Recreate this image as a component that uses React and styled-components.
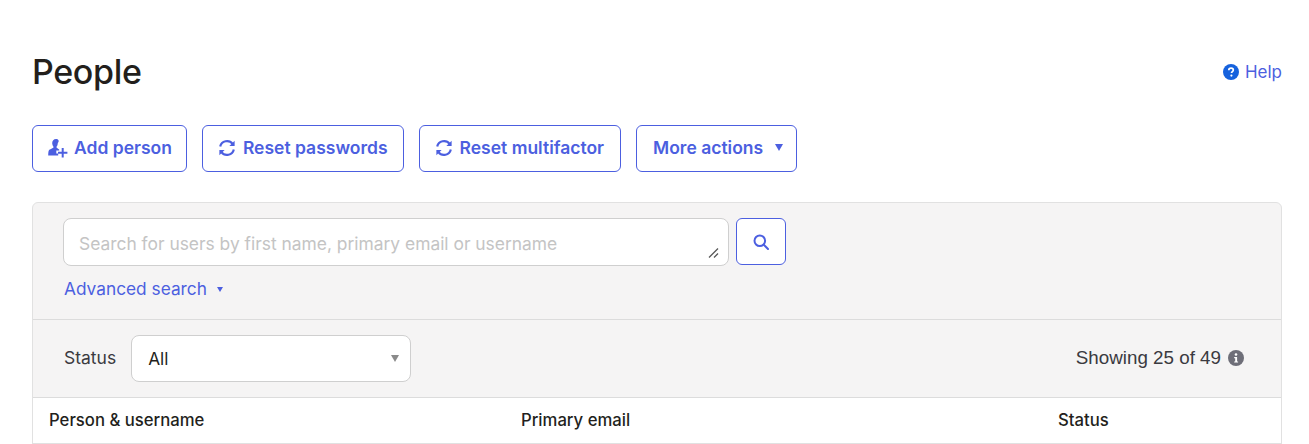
import React from 'react';
import styled, { createGlobalStyle } from 'styled-components';

const GlobalStyle = createGlobalStyle`
	html, body {
		margin: 0;
		padding: 0;
		background: #fff;
		font-family: Inter, 'Noto Sans', sans-serif;
		color: #231f1c;
	}
	* {
		box-sizing: border-box;
	}
`;

const BLUE = '#4c5fe0';

const PersonAddIcon = () => (
	<svg width="20" height="20" viewBox="0 0 20 20" fill={BLUE}>
		<path d="M8 1C5.700 1 4.200 2.700 4.200 5c0 1.500.6 2.800 1.200 3.600.3.400.2.900-.2 1.200C3.600 11 1.100 11.200.6 13c-.3 1.200-.4 2.700-.4 4.500h10v-2.100H8.300v-2.800h2.900v-1.100c-.7-.5-1.600-1-2.400-1.700-.4-.3-.5-.8-.2-1.200.7-.8 1.200-2.100 1.200-3.600C11.800 2.700 10.300 1 8 1z" />
		<path d="M13.700 10h2v3.700h3.700v2h-3.700v3.700h-2v-3.700H10v-2h3.700z" />
	</svg>
);

const RefreshIcon = () => (
	<svg width="18" height="18" viewBox="0 0 18 18" fill="none" stroke={BLUE} strokeWidth="2.200">
		<path d="M2.200 7.600A7 7 0 0 1 14.600 4.900" />
		<path d="M15.800 10.400A7 7 0 0 1 3.400 13.100" />
		<path d="M16.600 1.700v5.200h-5.200z" fill={BLUE} stroke="none" />
		<path d="M1.400 16.300v-5.200h5.200z" fill={BLUE} stroke="none" />
	</svg>
);

const SearchIcon = () => (
	<svg width="16" height="16" viewBox="0 0 16 16" fill="none" stroke={BLUE} strokeWidth="2">
		<circle cx="6.800" cy="6.800" r="5.300" />
		<path d="M10.800 10.800l4.200 4.200" strokeLinecap="round" />
	</svg>
);

const HelpIcon = () => (
	<svg width="16" height="16" viewBox="0 0 16 16">
		<circle cx="8" cy="8" r="8" fill="#1662dd" />
		<path
			d="M5.800 6.200c0-1.300 1-2 2.300-2s2.200.7 2.200 1.900c0 1.600-1.800 1.600-1.800 3"
			fill="none"
			stroke="#fff"
			strokeWidth="1.700"
		/>
		<circle cx="8.400" cy="11.600" r="1.100" fill="#fff" />
	</svg>
);

const InfoIcon = () => (
	<svg width="16" height="16" viewBox="0 0 16 16">
		<circle cx="8" cy="8" r="8" fill="#6e6e78" />
		<circle cx="8" cy="4.500" r="1.300" fill="#fff" />
		<path d="M6.200 7h2.900v4.400h1v1.200H6.200v-1.200h1V8.200h-1z" fill="#fff" />
	</svg>
);

const Page = styled.div`
	width: 1309px;
	height: 444px;
	overflow: hidden;
	padding: 52px 27px 0 32px;
`;

const Header = styled.header`
	display: flex;
	align-items: center;
	justify-content: space-between;
	height: 40px;
`;

const Title = styled.h1`
	margin: 0;
	font-size: 34px;
	font-weight: 500;
	line-height: 40px;
	letter-spacing: -0.35px;
	color: #231f1c;
`;

const HelpLink = styled.a`
	display: flex;
	align-items: center;
	gap: 6px;
	font-size: 17px;
	color: ${BLUE};
`;

const Toolbar = styled.div`
	display: flex;
	gap: 15px;
	margin-top: 33px;
`;

const ActionButton = styled.button`
	display: flex;
	align-items: center;
	gap: ${(p) => p.$gap || 7}px;
	height: 47px;
	padding: 0 ${(p) => p.$right || 15}px 2px ${(p) => p.$left || 15}px;
	background: #fff;
	border: 1px solid ${BLUE};
	border-radius: 6px;
	font-family: inherit;
	font-size: 17.5px;
	font-weight: 600;
	color: ${BLUE};
`;

const Caret = styled.span`
	width: 0;
	height: 0;
	border-left: ${(p) => p.$size}px solid transparent;
	border-right: ${(p) => p.$size}px solid transparent;
	border-top: ${(p) => p.$tall}px solid ${(p) => p.$color || BLUE};
`;

const Panel = styled.section`
	margin-top: 30px;
	border: 1px solid #e1e1e1;
	border-radius: 6px 6px 0 0;
	background: #f5f4f4;
`;

const SearchArea = styled.div`
	padding: 15px 30px 0;
	height: 117px;
	border-bottom: 1px solid #dcdcdc;
`;

const SearchRow = styled.div`
	display: flex;
	align-items: flex-start;
	gap: 7px;
`;

const SearchField = styled.div`
	position: relative;
	width: 666px;
	height: 48px;
`;

const SearchInput = styled.textarea`
	display: block;
	width: 100%;
	height: 100%;
	padding: 15px 15px 0;
	resize: none;
	background: #fff;
	border: 1px solid #cfcfcf;
	border-radius: 8px;
	font-family: inherit;
	font-size: 17.4px;
	line-height: 20px;
	color: #231f1c;
	&::placeholder {
		color: #c4c4c4;
		opacity: 1;
	}
`;

const ResizeGrip = styled.svg`
	position: absolute;
	right: 9px;
	bottom: 7px;
	pointer-events: none;
`;

const SearchButton = styled.button`
	display: flex;
	align-items: center;
	justify-content: center;
	width: 50px;
	height: 47px;
	background: #fff;
	border: 1px solid ${BLUE};
	border-radius: 6px;
`;

const AdvancedLink = styled.a`
	display: inline-flex;
	align-items: center;
	gap: 10px;
	margin: 12px 0 0 1px;
	font-size: 17.3px;
	line-height: 22px;
	color: ${BLUE};
`;

const FilterRow = styled.div`
	display: flex;
	align-items: center;
	justify-content: space-between;
	height: 78px;
	padding: 0 37px 0 31px;
	border-bottom: 1px solid #dcdcdc;
`;

const StatusFilter = styled.label`
	display: flex;
	align-items: center;
	gap: 15px;
	font-size: 17.5px;
	color: #3a3a3f;
`;

const StatusLabel = styled.span`
	padding-bottom: 2px;
`;

const SelectBox = styled.div`
	position: relative;
	width: 280px;
	height: 47px;
`;

const Select = styled.select`
	width: 100%;
	height: 100%;
	padding: 0 16px;
	appearance: none;
	background: #fff;
	border: 1px solid #cfcfcf;
	border-radius: 8px;
	font-family: inherit;
	font-size: 17.3px;
	color: #231f1c;
`;

const SelectCaret = styled.span`
	position: absolute;
	top: 20px;
	right: 12px;
	pointer-events: none;
	display: flex;
`;

const Count = styled.div`
	display: flex;
	align-items: center;
	gap: 7px;
	padding-bottom: 2px;
	font-family: 'Liberation Sans', Arial, sans-serif;
	font-size: 18.8px;
	color: #3a3a3f;
`;

const TableHead = styled.div`
	display: grid;
	grid-template-columns: 472px 537px 1fr;
	align-items: center;
	height: 46px;
	padding: 0 16px 2px;
	background: #fff;
	border-bottom: 1px solid #e1e1e1;
`;

const HeadCell = styled.div`
	font-size: 16.7px;
	font-weight: 500;
	color: #231f1c;
`;

const App = () => {
	return (
		<Page>
			<GlobalStyle />
			<Header>
				<Title>People</Title>
				<HelpLink>
					<HelpIcon />
					Help
				</HelpLink>
			</Header>
			<Toolbar>
				<ActionButton $gap={6} $right={14}>
					<PersonAddIcon />
					Add person
				</ActionButton>
				<ActionButton>
					<RefreshIcon />
					Reset passwords
				</ActionButton>
				<ActionButton $right={16}>
					<RefreshIcon />
					Reset multifactor
				</ActionButton>
				<ActionButton $gap={12} $left={16} $right={13}>
					More actions
					<Caret $size={4} $tall={7} />
				</ActionButton>
			</Toolbar>
			<Panel>
				<SearchArea>
					<SearchRow>
						<SearchField>
							<SearchInput placeholder="Search for users by first name, primary email or username" />
							<ResizeGrip width="12" height="12" viewBox="0 0 12 12" stroke="#555" strokeWidth="1.300">
								<path d="M1 10.500L10 1.500" />
								<path d="M6 10.500L10 6.500" />
							</ResizeGrip>
						</SearchField>
						<SearchButton>
							<SearchIcon />
						</SearchButton>
					</SearchRow>
					<AdvancedLink>
						Advanced search
						<Caret $size={3} $tall={5} />
					</AdvancedLink>
				</SearchArea>
				<FilterRow>
					<StatusFilter>
						<StatusLabel>Status</StatusLabel>
						<SelectBox>
							<Select defaultValue="all">
								<option value="all">All</option>
							</Select>
							<SelectCaret>
								<Caret $size={4} $tall={7} $color="#8a8a8a" />
							</SelectCaret>
						</SelectBox>
					</StatusFilter>
					<Count>
						Showing 25 of 49
						<InfoIcon />
					</Count>
				</FilterRow>
				<TableHead>
					<HeadCell>Person &amp; username</HeadCell>
					<HeadCell>Primary email</HeadCell>
					<HeadCell>Status</HeadCell>
				</TableHead>
			</Panel>
		</Page>
	);
};

export default App;
